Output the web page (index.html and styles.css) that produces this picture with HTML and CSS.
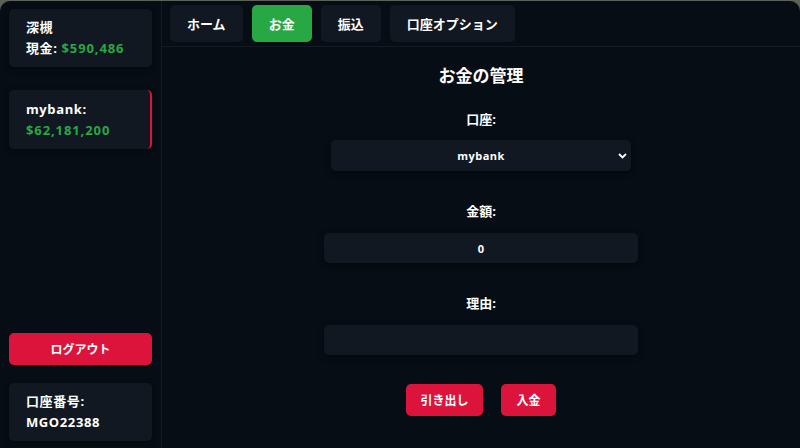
FILE: index.html
```html
<html>
  <head>
    <link rel="stylesheet" href="styles.css">
  </head>
  <body>
    <div class="app">
      <aside class="sidebar">
        <div class="card">
          <div>深槻</div>
          <div>現金: <span class="money">$590,486</span></div>
        </div>
        <div class="card bank">
          <div>mybank:</div>
          <div class="money">$62,181,200</div>
        </div>
        <button class="btn-red logout">ログアウト</button>
        <div class="card account">
          <div>口座番号:</div>
          <div>MGO22388</div>
        </div>
      </aside>
      <main class="main">
        <nav class="tabs">
          <button class="tab">ホーム</button>
          <button class="tab active">お金</button>
          <button class="tab">振込</button>
          <button class="tab">口座オプション</button>
        </nav>
        <section class="money-panel">
          <h2>お金の管理</h2>
          <div class="field">
            <label>口座:</label>
            <div class="select-box">
              <span>mybank</span>
              <svg class="chevron" width="9" height="6" viewBox="0 0 9 6">
                <path d="M1 1l3.5 3.5L8 1" fill="none" stroke="#fff" stroke-width="1.8"/>
              </svg>
            </div>
          </div>
          <div class="field">
            <label>金額:</label>
            <input class="input-field" type="text" value="0" />
          </div>
          <div class="field">
            <label>理由:</label>
            <input class="input-field" type="text" value="" />
          </div>
          <div class="actions">
            <button class="btn-red withdraw">引き出し</button>
            <button class="btn-red deposit">入金</button>
          </div>
        </section>
      </main>
    </div>
  </body>
</html>
```

FILE: styles.css
```css
body {
  margin: 0;
  background: #5d6158;
  font-family: "Open Sans", "Noto Sans CJK JP", sans-serif;
  color: #fff;
  font-weight: 700;
  overflow: hidden;
}
.app {
  display: flex;
  height: 447px;
  margin-top: 1px;
  background: #070d15;
  border-radius: 10px 10px 0 0;
  overflow: hidden;
}
.sidebar {
  width: 143px;
  padding: 8px 9px 7px 9px;
  border-right: 1px solid #141b24;
  display: flex;
  flex-direction: column;
}
.card {
  background: #111821;
  border-radius: 5px;
  padding: 8px 17px;
  font-size: 13px;
  line-height: 21px;
  letter-spacing: 0.6px;
  box-shadow: 0 2px 6px rgba(0, 0, 0, 0.35);
}
.bank {
  margin-top: 23px;
  padding: 9px 17px 8px 17px;
  border-right: 2px solid #dc143c;
}
.money {
  color: #28a745;
  letter-spacing: 0.9px;
}
.btn-red {
  background: #dc143c;
  color: #fff;
  border: none;
  border-radius: 5px;
  font-family: inherit;
  font-size: 12px;
  font-weight: 700;
  cursor: pointer;
}
.logout {
  margin-top: auto;
  height: 32px;
  width: 143px;
}
.account {
  margin-top: 18px;
}
.main {
  flex: 1;
  display: flex;
  flex-direction: column;
}
.tabs {
  display: flex;
  gap: 9px;
  padding: 4px 8px 4px 8px;
  border-bottom: 1px solid #141b24;
}
.tab {
  height: 37px;
  padding: 0 17px;
  background: #111821;
  color: #fff;
  border: none;
  border-radius: 5px;
  font-family: inherit;
  font-size: 13px;
  font-weight: 700;
}
.tab.active {
  background: #28a745;
}
.money-panel {
  display: flex;
  flex-direction: column;
  align-items: center;
}
h2 {
  margin: 17px 0 0 0;
  font-size: 17px;
  line-height: 24px;
}
.field {
  display: flex;
  flex-direction: column;
  align-items: center;
}
label {
  font-size: 13px;
  line-height: 18px;
  margin-top: 22px;
}
.field + .field label {
  margin-top: 31px;
}
.select-box {
  margin-top: 12px;
  width: 300px;
  height: 31px;
  background: #111821;
  border-radius: 5px;
  box-shadow: 0 2px 6px rgba(0, 0, 0, 0.4);
  display: flex;
  align-items: center;
  justify-content: center;
  position: relative;
  font-size: 11px;
  letter-spacing: 0.5px;
}
.chevron {
  position: absolute;
  right: 4px;
  top: 13px;
}
.input-field {
  margin-top: 13px;
  width: 314px;
  height: 30px;
  background: #111821;
  border: none;
  border-radius: 5px;
  box-shadow: 0 2px 6px rgba(0, 0, 0, 0.4);
  color: #fff;
  font-family: inherit;
  font-size: 11px;
  font-weight: 700;
  text-align: center;
  outline: none;
}
.actions {
  display: flex;
  gap: 18px;
  margin-top: 29px;
}
.actions .btn-red {
  height: 32px;
}
.withdraw {
  width: 77px;
}
.deposit {
  width: 55px;
}
```
